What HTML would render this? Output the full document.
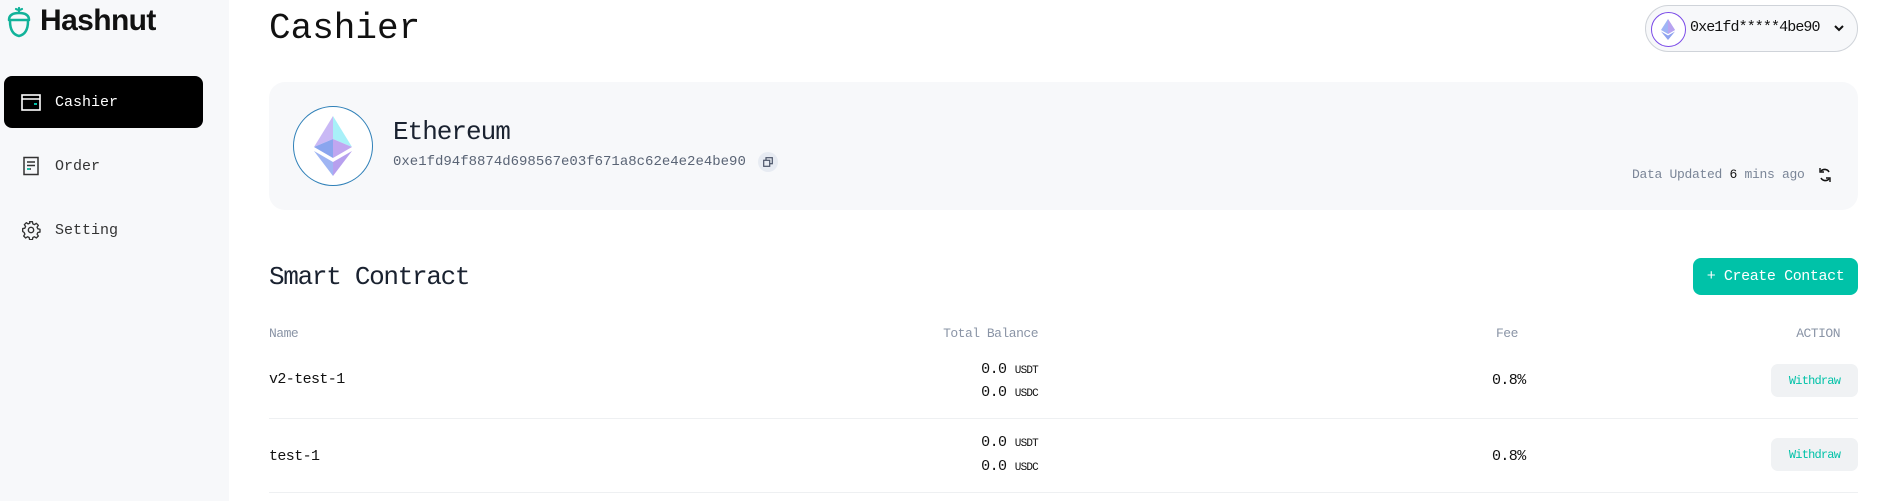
<!DOCTYPE html>
<html><head><meta charset="utf-8"><style>
*{margin:0;padding:0;box-sizing:border-box}
body{width:1894px;height:501px;background:#fff;font-family:"Liberation Mono",monospace;color:#111;position:relative;overflow:hidden}
.abs{position:absolute}
.side{left:0;top:0;width:229px;height:501px;background:#f7f8fa}
.nav{left:4px;width:199px;height:52px;border-radius:8px;display:flex;align-items:center;font-size:15px;color:#333}
.nav svg{margin-left:17px;margin-right:14px}
.th{top:326px;font-size:13px;color:#8a94a6;letter-spacing:-0.5px}
.wd{left:1771px;width:87px;height:33px;background:#f0f2f4;border-radius:7px;color:#00c2a8;font-size:12px;display:flex;align-items:center;justify-content:center;letter-spacing:-0.8px}
.line{left:269px;width:1589px;height:1px;background:#eef0f2}
.bal{right:856px;font-size:15px;text-align:right;letter-spacing:-0.6px}
.bal small{font-size:11px;letter-spacing:-0.8px}
.cell{font-size:15px;letter-spacing:-0.6px}
</style></head><body>
<div class="abs side"></div>
<svg class="abs" style="left:6px;top:6px" width="26" height="32" viewBox="0 0 26 32"><path d="M13 2 L13 7 M10 3 Q13 5 16 3" stroke="#12b39a" stroke-width="2.2" fill="none" stroke-linecap="round"/><path d="M3 14 Q3 7 13 7 Q23 7 23 14 Z" fill="none" stroke="#12b39a" stroke-width="2.5" stroke-linejoin="round"/><path d="M4 15 Q4 28 13 30 Q22 28 22 15" fill="none" stroke="#12b39a" stroke-width="2.5"/></svg>
<div class="abs" style="left:40px;top:4px;font-family:'Liberation Sans',sans-serif;font-size:30px;font-weight:600;letter-spacing:-0.6px;color:#111">Hashnut</div>
<div class="abs nav" style="top:76px;background:#000;color:#fff"><svg width="20" height="17" viewBox="0 0 20 17"><rect x="1" y="1" width="18" height="15" fill="none" stroke="#fff" stroke-width="1.6"/><line x1="1" y1="5" x2="19" y2="5" stroke="#fff" stroke-width="1.6"/><rect x="13" y="9" width="3" height="2" fill="#00c2a8"/></svg>Cashier</div>
<div class="abs nav" style="top:140px"><svg width="20" height="20" viewBox="0 0 20 20"><rect x="3" y="1.5" width="14" height="17" fill="none" stroke="#333" stroke-width="1.5"/><path d="M6 6h8M6 9.5h8M6 13h4" stroke="#333" stroke-width="1.5"/><path d="M6 13h3" stroke="#00c2a8" stroke-width="1.5"/></svg>Order</div>
<div class="abs nav" style="top:204px"><svg width="20" height="20" viewBox="0 0 24 24"><circle cx="12" cy="12" r="3.2" fill="none" stroke="#333" stroke-width="1.7"/><path d="M10.3 2h3.4l.5 2.6 2 .9 2.2-1.5 2.4 2.4-1.5 2.2.9 2 2.6.5v3.4l-2.6.5-.9 2 1.5 2.2-2.4 2.4-2.2-1.5-2 .9-.5 2.6h-3.4l-.5-2.6-2-.9-2.2 1.5-2.4-2.4 1.5-2.2-.9-2L2 13.7v-3.4l2.6-.5.9-2L4 5.6 6.4 3.2l2.2 1.5 2-.9z" fill="none" stroke="#333" stroke-width="1.6" stroke-linejoin="round"/></svg>Setting</div>

<div class="abs" style="left:269px;top:8px;font-size:36px;color:#111">Cashier</div>

<div class="abs" style="left:1645px;top:5px;width:213px;height:47px;border:1px solid #cfd3d9;border-radius:24px;background:#f7f8fa"></div>
<div class="abs" style="left:1651px;top:12px;width:35px;height:35px;border:1.5px solid #7b4be8;border-radius:50%;background:#fff"></div>
<svg class="abs" style="left:1661px;top:19px" width="14" height="21" viewBox="0 0 14 21"><path d="M7 0L0 11 7 15 14 11Z" fill="#9fb4f5"/><path d="M7 0L14 11 7 15Z" fill="#b8a3f0"/><path d="M0 12.5L7 21 14 12.5 7 16.5Z" fill="#8ea2ef"/></svg>
<div class="abs" style="left:1690px;top:19px;font-size:15px;color:#111;letter-spacing:-0.9px">0xe1fd*****4be90</div>
<svg class="abs" style="left:1834px;top:24px" width="10" height="8" viewBox="0 0 10 8"><path d="M1 2l4 4 4-4" stroke="#111" stroke-width="2" fill="none"/></svg>

<div class="abs" style="left:269px;top:82px;width:1589px;height:128px;background:#f7f8fa;border-radius:16px"></div>
<div class="abs" style="left:293px;top:106px;width:80px;height:80px;border:1.2px solid #2f80b8;border-radius:50%;background:#fff"></div>
<svg class="abs" style="left:314px;top:116px" width="38" height="60" viewBox="0 0 38 60"><path d="M19 0L0 31 19 23Z" fill="#c9b8f5"/><path d="M19 0L38 31 19 23Z" fill="#a8f0f8"/><path d="M0 31L19 42 19 23Z" fill="#8aa5ee"/><path d="M38 31L19 42 19 23Z" fill="#c0a6f0"/><path d="M0 35L19 60 19 46Z" fill="#9fb5f3"/><path d="M38 35L19 60 19 46Z" fill="#b7a0ee"/></svg>
<div class="abs" style="left:393px;top:117px;font-size:26px;color:#1a2230;letter-spacing:-1px">Ethereum</div>
<div class="abs" style="left:393px;top:154px;font-size:14px;color:#5a6475">0xe1fd94f8874d698567e03f671a8c62e4e2e4be90</div>
<div class="abs" style="left:758px;top:152px;width:20px;height:20px;border-radius:50%;background:#e7ebf2"></div>
<svg class="abs" style="left:763px;top:157px" width="10" height="10" viewBox="0 0 10 10"><rect x="3" y="0.7" width="6.3" height="6" fill="none" stroke="#4a5468" stroke-width="1.2"/><rect x="0.7" y="3.3" width="6" height="6" fill="#e7ebf2" stroke="#4a5468" stroke-width="1.2"/></svg>
<div class="abs" style="left:1632px;top:167px;font-size:13px;color:#7a8597;letter-spacing:-0.3px">Data Updated <span style="color:#111">6</span> mins ago</div>
<svg class="abs" style="left:1818px;top:167px" width="14" height="16" viewBox="0 0 14 16"><path d="M11 5A5 5 0 0 0 3 4M3 11A5 5 0 0 0 11 12" stroke="#111" stroke-width="1.6" fill="none"/><path d="M2 1v4h4M12 15v-4H8" stroke="#111" stroke-width="1.4" fill="none"/></svg>

<div class="abs" style="left:269px;top:262px;font-size:26px;color:#1a2230;letter-spacing:-1.3px">Smart Contract</div>
<div class="abs" style="left:1693px;top:258px;width:165px;height:37px;background:#00c2a8;border-radius:8px;color:#fff;font-size:15px;display:flex;align-items:center;justify-content:center;letter-spacing:-0.4px">+ Create Contact</div>

<div class="abs th" style="left:269px">Name</div>
<div class="abs th" style="right:856px">Total Balance</div>
<div class="abs th" style="left:1496px">Fee</div>
<div class="abs th" style="right:54px">ACTION</div>

<div class="abs cell" style="left:269px;top:371px">v2-test-1</div>
<div class="abs bal" style="top:361px">0.0 <small>USDT</small></div>
<div class="abs bal" style="top:384px">0.0 <small>USDC</small></div>
<div class="abs cell" style="left:1492px;top:372px">0.8%</div>
<div class="abs wd" style="top:364px">Withdraw</div>
<div class="abs line" style="top:418px"></div>

<div class="abs cell" style="left:269px;top:448px">test-1</div>
<div class="abs bal" style="top:434px">0.0 <small>USDT</small></div>
<div class="abs bal" style="top:458px">0.0 <small>USDC</small></div>
<div class="abs cell" style="left:1492px;top:448px">0.8%</div>
<div class="abs wd" style="top:438px">Withdraw</div>
<div class="abs line" style="top:492px"></div>
</body></html>
